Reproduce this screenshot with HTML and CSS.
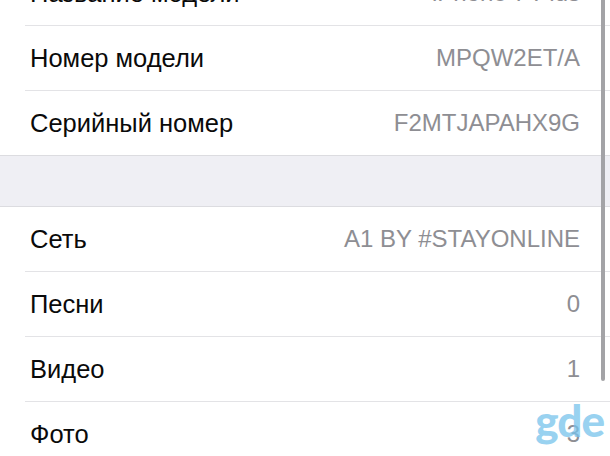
FILE: index.html
```html
<!DOCTYPE html>
<html lang="ru">
<head>
    <meta charset="UTF-8">
    <meta name="viewport" content="width=device-width, initial-scale=1.0">
    <title>Об этом устройстве</title>
    <link rel="stylesheet" href="styles.css">
</head>
<body>
    <div class="screen">
        <!-- Device info -->
        <div class="group group-top">
            <div class="row"><span class="label">Название модели</span><span class="value">iPhone 7 Plus</span></div>
            <div class="row"><span class="label">Номер модели</span><span class="value">MPQW2ET/A</span></div>
            <div class="row"><span class="label">Серийный номер</span><span class="value">F2MTJAPAHX9G</span></div>
        </div>

        <div class="gap"></div>

        <!-- Network and media -->
        <div class="group">
            <div class="row"><span class="label">Сеть</span><span class="value">A1 BY #STAYONLINE</span></div>
            <div class="row"><span class="label">Песни</span><span class="value">0</span></div>
            <div class="row"><span class="label">Видео</span><span class="value">1</span></div>
            <div class="row"><span class="label">Фото</span><span class="value">3</span></div>
        </div>

        <div class="scrollbar"></div>
        <div class="watermark">gde</div>
    </div>
</body>
</html>
```

FILE: styles.css
```css
html, body {
    margin: 0;
    padding: 0;
    background-color: #fff;
}

body {
    font-family: 'Liberation Sans', Arial, sans-serif;
    width: 610px;
    height: 456px;
    overflow: hidden;
}

.screen {
    position: relative;
    width: 610px;
    height: 456px;
    overflow: hidden;
}

.group {
    background-color: #fff;
    border-top: 1px solid #dcdce0;
    border-bottom: 1px solid #dcdce0;
}

.group-top {
    margin-top: -39px;
    border-top: none;
}

.row {
    display: flex;
    justify-content: space-between;
    align-items: center;
    height: 64px;
    margin-left: 25px;
    padding: 0 30px 0 5px;
    border-bottom: 1px solid #e3e3e6;
}

.row:last-child {
    border-bottom: none;
}

.label {
    font-size: 25.5px;
    color: #0a0a0a;
}

.value {
    font-size: 24px;
    color: #8e8e93;
}

.gap {
    height: 50px;
    background-color: #efeff4;
}

/* scroll indicator on the right edge */
.scrollbar {
    position: absolute;
    top: -10px;
    right: 5px;
    width: 4px;
    height: 391px;
    border-radius: 2px;
    background-color: #a3a3a6;
}

.watermark {
    position: absolute;
    right: 6px;
    bottom: 14px;
    font-family: Lato, sans-serif;
    font-weight: 900;
    font-size: 44px;
    line-height: 1;
    letter-spacing: -1px;
    color: rgba(120, 195, 236, 0.75);
}
```
